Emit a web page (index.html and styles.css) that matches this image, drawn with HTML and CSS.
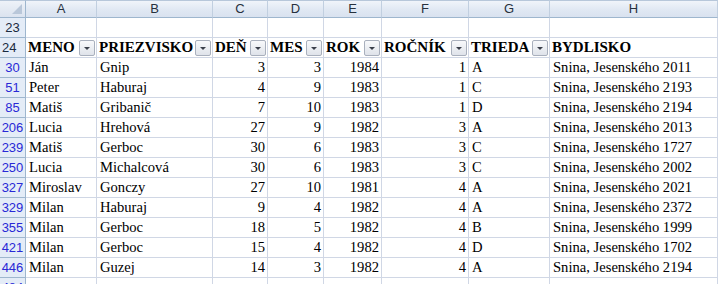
FILE: index.html
```html
<!DOCTYPE html>
<html>
<head>
<meta charset="utf-8">
<link rel="stylesheet" href="styles.css">
</head>
<body>
<div class="sheet">
  <div class="row hdr">
    <div class="c rh corner"><span class="tri"></span></div>
    <div class="c ch">A</div><div class="c ch">B</div><div class="c ch">C</div><div class="c ch">D</div>
    <div class="c ch">E</div><div class="c ch">F</div><div class="c ch">G</div><div class="c ch">H</div>
  </div>
  <div class="row">
    <div class="c rh">23</div>
    <div class="c"></div><div class="c"></div><div class="c"></div><div class="c"></div>
    <div class="c"></div><div class="c"></div><div class="c"></div><div class="c"></div>
  </div>
  <div class="row head">
    <div class="c rh">24</div>
    <div class="c"><b>MENO</b><span class="fb"></span></div>
    <div class="c"><b>PRIEZVISKO</b><span class="fb"></span></div>
    <div class="c"><b>DEŇ</b><span class="fb"></span></div>
    <div class="c"><b>MES</b><span class="fb"></span></div>
    <div class="c"><b>ROK</b><span class="fb"></span></div>
    <div class="c"><b>ROČNÍK</b><span class="fb"></span></div>
    <div class="c"><b>TRIEDA</b><span class="fb"></span></div>
    <div class="c"><b>BYDLISKO</b></div>
  </div>
  <div class="row"><div class="c rh f">30</div><div class="c">Ján</div><div class="c">Gnip</div><div class="c n">3</div><div class="c n">3</div><div class="c n">1984</div><div class="c n">1</div><div class="c">A</div><div class="c">Snina, Jesenského 2011</div></div>
  <div class="row"><div class="c rh f">51</div><div class="c">Peter</div><div class="c">Haburaj</div><div class="c n">4</div><div class="c n">9</div><div class="c n">1983</div><div class="c n">1</div><div class="c">C</div><div class="c">Snina, Jesenského 2193</div></div>
  <div class="row"><div class="c rh f">85</div><div class="c">Matiš</div><div class="c">Gribanič</div><div class="c n">7</div><div class="c n">10</div><div class="c n">1983</div><div class="c n">1</div><div class="c">D</div><div class="c">Snina, Jesenského 2194</div></div>
  <div class="row"><div class="c rh f">206</div><div class="c">Lucia</div><div class="c">Hrehová</div><div class="c n">27</div><div class="c n">9</div><div class="c n">1982</div><div class="c n">3</div><div class="c">A</div><div class="c">Snina, Jesenského 2013</div></div>
  <div class="row"><div class="c rh f">239</div><div class="c">Matiš</div><div class="c">Gerboc</div><div class="c n">30</div><div class="c n">6</div><div class="c n">1983</div><div class="c n">3</div><div class="c">C</div><div class="c">Snina, Jesenského 1727</div></div>
  <div class="row"><div class="c rh f">250</div><div class="c">Lucia</div><div class="c">Michalcová</div><div class="c n">30</div><div class="c n">6</div><div class="c n">1983</div><div class="c n">3</div><div class="c">C</div><div class="c">Snina, Jesenského 2002</div></div>
  <div class="row"><div class="c rh f">327</div><div class="c">Miroslav</div><div class="c">Gonczy</div><div class="c n">27</div><div class="c n">10</div><div class="c n">1981</div><div class="c n">4</div><div class="c">A</div><div class="c">Snina, Jesenského 2021</div></div>
  <div class="row"><div class="c rh f">329</div><div class="c">Milan</div><div class="c">Haburaj</div><div class="c n">9</div><div class="c n">4</div><div class="c n">1982</div><div class="c n">4</div><div class="c">A</div><div class="c">Snina, Jesenského 2372</div></div>
  <div class="row"><div class="c rh f">355</div><div class="c">Milan</div><div class="c">Gerboc</div><div class="c n">18</div><div class="c n">5</div><div class="c n">1982</div><div class="c n">4</div><div class="c">B</div><div class="c">Snina, Jesenského 1999</div></div>
  <div class="row"><div class="c rh f">421</div><div class="c">Milan</div><div class="c">Gerboc</div><div class="c n">15</div><div class="c n">4</div><div class="c n">1982</div><div class="c n">4</div><div class="c">D</div><div class="c">Snina, Jesenského 1702</div></div>
  <div class="row"><div class="c rh f">446</div><div class="c">Milan</div><div class="c">Guzej</div><div class="c n">14</div><div class="c n">3</div><div class="c n">1982</div><div class="c n">4</div><div class="c">A</div><div class="c">Snina, Jesenského 2194</div></div>
  <div class="row"><div class="c rh f">484</div><div class="c"></div><div class="c"></div><div class="c"></div><div class="c"></div><div class="c"></div><div class="c"></div><div class="c"></div><div class="c"></div></div>
</div>
</body>
</html>
```
FILE: styles.css
```css
html, body { margin: 0; padding: 0; background: #fff; overflow: hidden; }
.sheet {
  width: 718px;
  font-family: "Liberation Serif", "Times New Roman", serif;
  font-size: 14.6px;
  color: #000;
}
.row {
  display: grid;
  grid-template-columns: 26px 71px 116px 55px 56px 58px 87px 81px 1fr;
  height: 20px;
}
.c {
  box-sizing: border-box;
  border-right: 1px solid #d0d7e5;
  border-bottom: 1px solid #d0d7e5;
  padding: 0 3px;
  line-height: 19px;
  white-space: nowrap;
  overflow: hidden;
  display: flex;
  align-items: center;
}
.c.n { justify-content: flex-end; padding-right: 2px; }
.head .c { justify-content: space-between; padding-right: 1px; padding-left: 2px; }
.head b { font-weight: bold; font-size: 15px; }
.rh {
  background: #e4ecf7;
  border-right: 1px solid #9eb6ce;
  border-bottom: 1px solid #9eb6ce;
  font-family: "Liberation Sans", Arial, sans-serif;
  font-size: 13px;
  color: #1a2a40;
  justify-content: center;
  padding: 0;
}
.rh.f { color: #2929d6; }
.hdr { height: 18px; }
.ch {
  background: linear-gradient(#f0f4fa, #e0e8f3 55%, #d9e2ef);
  border-right: 1px solid #c1cfe0;
  border-bottom: 1px solid #9eb6ce;
  border-top: 1px solid #b7c7da;
  font-family: "Liberation Sans", Arial, sans-serif;
  font-size: 13px;
  color: #27313e;
  justify-content: center;
  line-height: 16px;
}
.corner {
  background: linear-gradient(#eef2f8, #dbe3ef);
  border-top: 1px solid #b7c7da;
  position: relative;
}
.tri {
  position: absolute;
  right: 3px;
  bottom: 3px;
  width: 0; height: 0;
  border-left: 10px solid transparent;
  border-bottom: 10px solid #b9c7d9;
}
.fb {
  flex: none;
  width: 16px;
  height: 16px;
  box-sizing: border-box;
  border: 1px solid #a9b0bd;
  border-radius: 2px;
  background: linear-gradient(#f8f9fb, #dfe3ea);
  position: relative;
}
.fb::after {
  content: "";
  position: absolute;
  left: 4px;
  top: 6px;
  border-left: 3px solid transparent;
  border-right: 3px solid transparent;
  border-top: 3px solid #3a3f4a;
}
```
